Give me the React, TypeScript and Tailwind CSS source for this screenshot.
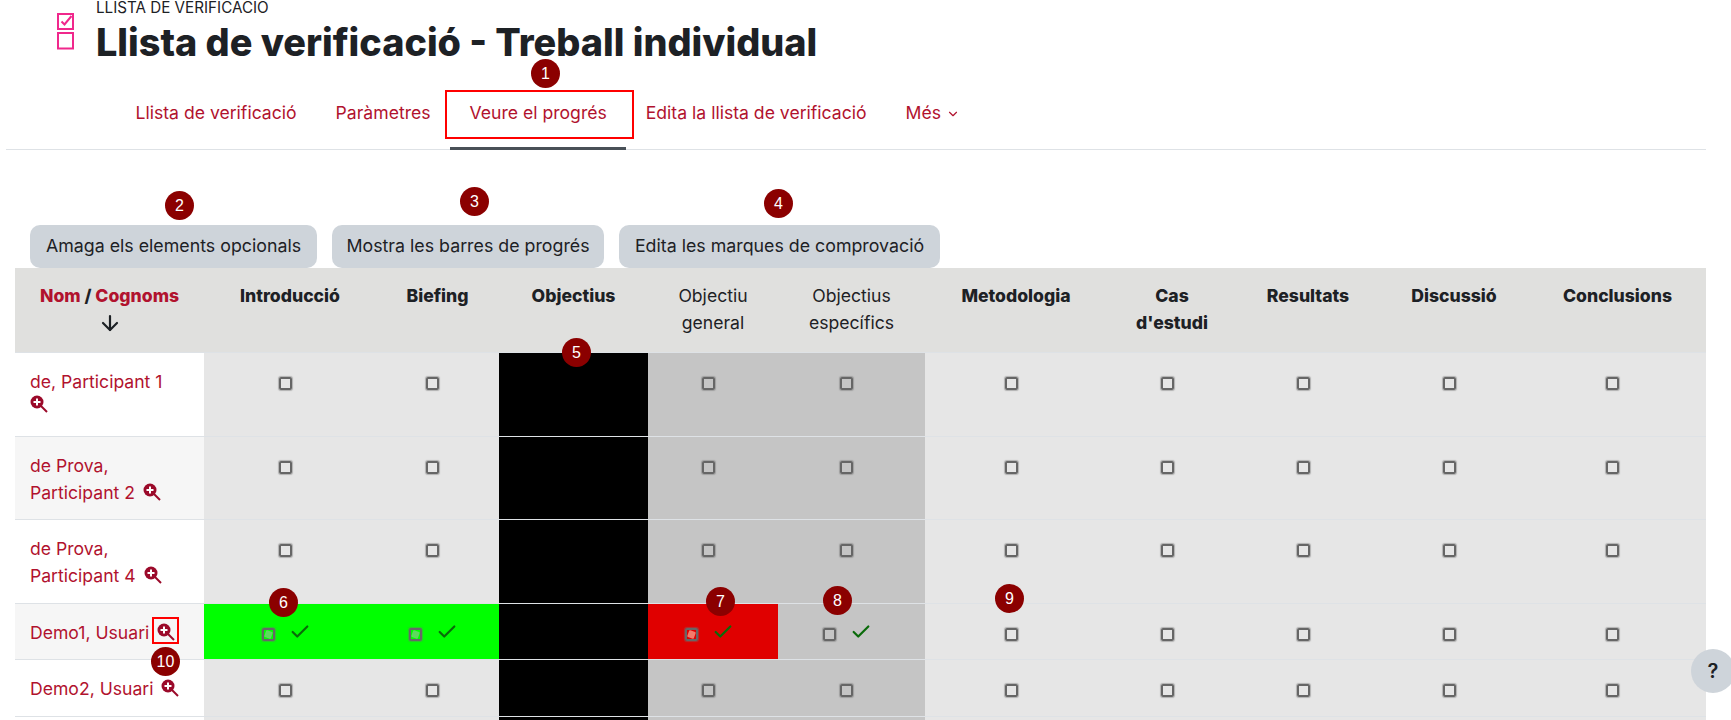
import { ArrowDown, Check, ChevronDown } from "lucide-react";

const columns = [
  { label: ["Introducció"], width: "w-[172px]", bold: true },
  { label: ["Biefing"], width: "w-[123px]", bold: true },
  { label: ["Objectius"], width: "w-[149px]", bold: true },
  { label: ["Objectiu", "general"], width: "w-[130px]", bold: false },
  { label: ["Objectius", "específics"], width: "w-[147px]", bold: false },
  { label: ["Metodologia"], width: "w-[182px]", bold: true },
  { label: ["Cas", "d'estudi"], width: "w-[130px]", bold: true },
  { label: ["Resultats"], width: "w-[142px]", bold: true },
  { label: ["Discussió"], width: "w-[150px]", bold: true },
  { label: ["Conclusions"], width: "w-[177px]", bold: true },
];

const rows = [
  { name: ["de, Participant 1", ""], height: "h-[84px]", stripe: false, demo: false },
  { name: ["de Prova,", "Participant 2"], height: "h-[83px]", stripe: true, demo: false },
  { name: ["de Prova,", "Participant 4"], height: "h-[84px]", stripe: false, demo: false },
  { name: ["Demo1, Usuari"], height: "h-[56px]", stripe: true, demo: true },
  { name: ["Demo2, Usuari"], height: "h-[57px]", stripe: false, demo: false },
];

const markers = [
  { n: 1, pos: "left-[531px] top-[59px]" },
  { n: 2, pos: "left-[165px] top-[191px]" },
  { n: 3, pos: "left-[460px] top-[187px]" },
  { n: 4, pos: "left-[764px] top-[189px]" },
  { n: 5, pos: "left-[562px] top-[338px]" },
  { n: 6, pos: "left-[269px] top-[588px]" },
  { n: 7, pos: "left-[706px] top-[587px]" },
  { n: 8, pos: "left-[823px] top-[586px]" },
  { n: 9, pos: "left-[995px] top-[584px]" },
  { n: 10, pos: "left-[151px] top-[647px]" },
];

const tabs = ["Llista de verificació", "Paràmetres", "Veure el progrés", "Edita la llista de verificació"];

const buttons = [
  { label: "Amaga els elements opcionals", width: "w-[287px]" },
  { label: "Mostra les barres de progrés", width: "w-[272px]" },
  { label: "Edita les marques de comprovació", width: "w-[321px]" },
];

function cellColor(col: number, demo: boolean) {
  if (col === 2) return "bg-black";
  if (demo && col < 2) return "bg-[#00ff00]";
  if (demo && col === 3) return "bg-[#e00000]";
  if (col === 3 || col === 4) return "bg-[#c5c5c5]";
  return "bg-[#e6e6e6]";
}

function Box({ tint }: { tint?: string }) {
  return (
    <span className="relative block h-[13px] w-[13px] rounded-[2px] border-2 border-[#666666] shadow-[0_0_1px_1px_rgba(110,110,110,0.45)]">
      {tint && <span className={`absolute inset-[1px] rotate-[20deg] rounded-[1px] ${tint}`} />}
    </span>
  );
}

function Mark({ col, demo }: { col: number; demo: boolean }) {
  if (col === 2) return null;
  const checked = demo && col < 5;
  let tint;
  if (demo && col < 2) tint = "bg-[#5fd85f]";
  if (demo && col === 3) tint = "bg-[#f47a6a]";
  return (
    <div className={`flex items-start justify-center gap-[14px] pt-[24px] ${checked ? "pr-[8px]" : "pr-[10px]"}`}>
      <Box tint={tint} />
      {checked && <Check size={22} strokeWidth={2.4} className="-mt-[7px] text-[#0a6b0a]" />}
    </div>
  );
}

function Zoom() {
  return (
    <svg width="18" height="18" viewBox="0 0 18 18" className="shrink-0">
      <path d="M11 11l6 6" stroke="#9b0a2a" strokeWidth="2" />
      <circle cx="7" cy="7" r="6.500" fill="#9b0a2a" />
      <path d="M3.500 7h7M7 3.500v7" stroke="#ffffff" strokeWidth="2" />
    </svg>
  );
}

export default function App() {
  return (
    <div className="relative h-screen overflow-hidden bg-white font-['Inter',sans-serif] text-[#1d2125]">
      <header className="flex items-start pl-[57px]">
        <svg width="18" height="37" viewBox="0 0 18 37" fill="none" className="mt-[13px] text-[#f0288c]" stroke="currentColor" strokeWidth="2">
          <path d="M1 1h15v15H1z" />
          <path d="M4.500 8.500l3 3L14.500 3" />
          <path d="M1 20h15v15.500H1z" />
        </svg>
        <div className="ml-[21px]">
          <div className="text-[15.2px] leading-[16px]">LLISTA DE VERIFICACIÓ</div>
          <h1 className="mt-[4px] text-[37.8px] font-extrabold leading-[44px]">Llista de verificació - Treball individual</h1>
        </div>
      </header>

      <nav className="ml-[6px] mt-[23px] flex w-[1700px] border-b border-[#dee2e6] pl-[110px] text-[17.6px] text-[#b1122e]">
        {tabs.map((tab) => (
          <a
            key={tab}
            className={`-mb-px border-b-[3px] px-[19.5px] pb-[22px] pt-[14px] leading-[24px] ${
              tab === "Veure el progrés" ? "border-[#495057]" : "border-transparent"
            }`}
          >
            {tab}
          </a>
        ))}
        <a className="-mb-px flex items-start gap-[5px] border-b-[3px] border-transparent px-[19.5px] pb-[22px] pt-[14px] leading-[24px]">
          Més
          <ChevronDown size={14} strokeWidth={2} className="mt-[6px]" />
        </a>
      </nav>

      <div className="ml-[30px] mt-[75px] flex gap-[15px]">
        {buttons.map((b) => (
          <button key={b.label} className={`h-[43px] rounded-[10px] bg-[#ced4da] text-[17.8px] ${b.width}`}>
            {b.label}
          </button>
        ))}
      </div>

      <table className="ml-[15px] w-[1691px] table-fixed border-collapse text-[17.6px]">
        <colgroup>
          <col className="w-[189px]" />
          {columns.map((c) => (
            <col key={c.label[0] + c.width} className={c.width} />
          ))}
        </colgroup>
        <thead>
          <tr className="h-[84px] bg-[#e0e0de] align-top leading-[27px]">
            <th className="pt-[14px] font-extrabold">
              <span className="text-[#b1122e]">Nom</span> / <span className="text-[#b1122e]">Cognoms</span>
              <ArrowDown size={24} strokeWidth={2.2} className="mx-auto mt-[2px]" />
            </th>
            {columns.map((c) => (
              <th key={c.label[0] + c.width} className={`pt-[14px] ${c.bold ? "font-extrabold" : "font-normal"}`}>
                {c.label.map((line) => (
                  <div key={line}>{line}</div>
                ))}
              </th>
            ))}
          </tr>
        </thead>
        <tbody>
          {rows.map((row) => (
            <tr key={row.name.join()} className={`${row.height} border-t border-[#dee2e6] align-top`}>
              <td className={`pl-[15px] pt-[15px] leading-[27px] text-[#b1122e] ${row.stripe ? "bg-[#f6f6f6]" : "bg-white"}`}>
                {row.name.map((line, i) => (
                  <div key={line + i} className="flex items-center gap-[8px]">
                    {line}
                    {i === row.name.length - 1 && <Zoom />}
                  </div>
                ))}
              </td>
              {columns.map((c, col) => (
                <td key={c.label[0] + c.width} className={cellColor(col, row.demo)}>
                  <Mark col={col} demo={row.demo} />
                </td>
              ))}
            </tr>
          ))}
          <tr className="h-[20px] border-t border-[#dee2e6]">
            <td className="bg-white" />
            {columns.map((c, col) => (
              <td key={c.label[0] + c.width} className={cellColor(col, false)} />
            ))}
          </tr>
        </tbody>
      </table>

      {/* annotations drawn over the screenshot */}
      <div className="absolute left-[445px] top-[90px] h-[49px] w-[189px] border-2 border-[#ff0000]" />
      <div className="absolute left-[152px] top-[617px] h-[27px] w-[27px] border-2 border-[#ff0000]" />
      {markers.map((m) => (
        <div
          key={m.n}
          className={`absolute flex h-[29px] w-[29px] items-center justify-center rounded-full bg-[#8b0000] font-['Liberation_Sans',sans-serif] text-[16px] text-white ${m.pos}`}
        >
          {m.n}
        </div>
      ))}

      <button className="absolute left-[1691px] top-[649px] flex h-[44px] w-[44px] items-center justify-center rounded-full bg-[#ced4da] text-[20px] font-semibold">
        ?
      </button>
    </div>
  );
}
